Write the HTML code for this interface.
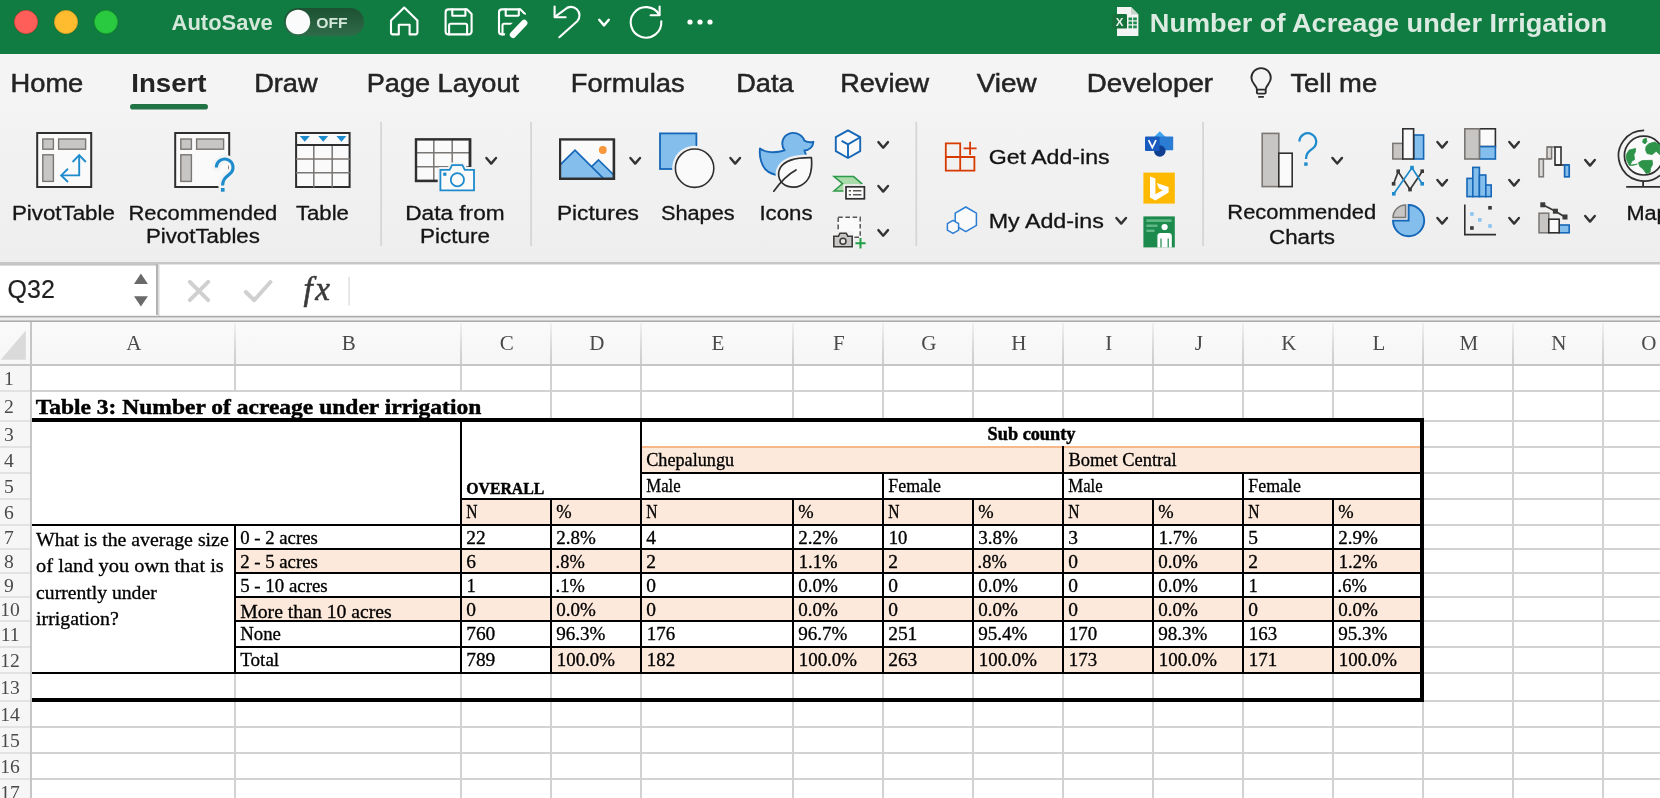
<!DOCTYPE html><html><head><meta charset="utf-8"><title>Number of Acreage under Irrigation</title><style>
*{box-sizing:border-box;margin:0;padding:0}
html,body{width:1660px;height:798px;overflow:hidden;background:#fff}
#root{position:absolute;left:0;top:0;width:1660px;height:798px;will-change:transform}
body{font-family:"Liberation Sans",sans-serif;position:relative;color:#242424}
.abs,.abs *{position:absolute}
#title{left:0;top:0;width:1660px;height:54px;background:#107c41}
#tabs{left:0;top:54px;width:1660px;height:58px;background:#f4f4f4}
#ribbon{left:0;top:112px;width:1660px;height:150px;background:linear-gradient(#f3f3f3,#eeeeee)}
#fbar{left:0;top:262px;width:1660px;height:60px;background:#e9e9e9}
#sheet{left:0;top:322px;width:1660px;height:476px;background:#fff;overflow:hidden}
.ln{position:absolute;background:#000}
.g{position:absolute;background:#d2d2d2}
.p{position:absolute;background:#fce9db}
</style></head><body><div id="root">
<div id="title" class="abs">
<svg style="position:absolute;left:0;top:0" width="1660" height="54" viewBox="0 0 1660 54"><defs><linearGradient id="tg" x1="0" y1="0" x2="0" y2="1"><stop offset="0" stop-color="#1d5132"/><stop offset="1" stop-color="#2f6b49"/></linearGradient></defs><circle cx="26" cy="22" r="12.3" fill="#0b6a36"/><circle cx="26" cy="22" r="11.6" fill="#ff5f58" stroke="#d8493f" stroke-width="0.8"/><circle cx="66" cy="22" r="12.3" fill="#0b6a36"/><circle cx="66" cy="22" r="11.6" fill="#febc2e" stroke="#d6a024" stroke-width="0.8"/><circle cx="106" cy="22" r="12.3" fill="#0b6a36"/><circle cx="106" cy="22" r="11.6" fill="#29c940" stroke="#1ea631" stroke-width="0.8"/><text x="171.6" y="29.6" font-family='"Liberation Sans",sans-serif' font-size="21.8" font-weight="bold" fill="#d3e8da" stroke="#d3e8da" stroke-width="0" textLength="101.2" lengthAdjust="spacingAndGlyphs" >AutoSave</text><rect x="284" y="8" width="80" height="28" rx="14" fill="url(#tg)"/><circle cx="298" cy="22" r="12.2" fill="#fbfbfb"/><text x="316.2" y="27.6" font-family='"Liberation Sans",sans-serif' font-size="14" font-weight="bold" fill="#d3e8da" stroke="#d3e8da" stroke-width="0" textLength="31.4" lengthAdjust="spacingAndGlyphs" >OFF</text><path d="M391 20.5 L404.2 7.6 L417.4 20.5 V32.6 a1.8 1.8 0 0 1 -1.8 1.8 H409.6 V24.8 H398.8 V34.4 H392.8 a1.8 1.8 0 0 1 -1.8 -1.8 Z" fill="none" stroke="#ffffff" stroke-width="2.1" stroke-linejoin="round" stroke-linecap="round"/><path d="M448.6 9.4 H467.1 L471.6 14 V31.4 a3 3 0 0 1 -3 3 H448.6 a3 3 0 0 1 -3 -3 V12.4 a3 3 0 0 1 3 -3 Z" fill="none" stroke="#ffffff" stroke-width="2.1" stroke-linejoin="round" stroke-linecap="round"/><path d="M452.3 9.4 V15.8 H465.4 V9.4" fill="none" stroke="#ffffff" stroke-width="2.1" stroke-linejoin="round" stroke-linecap="round"/><path d="M449.1 34.4 V25.2 a1.5 1.5 0 0 1 1.5 -1.5 H465.6 a1.5 1.5 0 0 1 1.5 1.5 V34.4" fill="none" stroke="#ffffff" stroke-width="2.1" stroke-linejoin="round" stroke-linecap="round"/><g><path d="M502.0 9.4 H520.5 L525.0 14 V31.4 a3 3 0 0 1 -3 3 H502.0 a3 3 0 0 1 -3 -3 V12.4 a3 3 0 0 1 3 -3 Z" fill="none" stroke="#ffffff" stroke-width="2.1" stroke-linejoin="round" stroke-linecap="round"/><path d="M505.7 9.4 V15.8 H518.8 V9.4" fill="none" stroke="#ffffff" stroke-width="2.1" stroke-linejoin="round" stroke-linecap="round"/><path d="M502.5 34.4 V25.2 a1.5 1.5 0 0 1 1.5 -1.5 H519.0 a1.5 1.5 0 0 1 1.5 1.5 V34.4" fill="none" stroke="#ffffff" stroke-width="2.1" stroke-linejoin="round" stroke-linecap="round"/></g><path d="M507 41 L509 31 L521.5 18.5 a3.2 3.2 0 0 1 4.6 0 l1.4 1.4 a3.2 3.2 0 0 1 0 4.6 L516 38 Z" fill="#107c41" stroke="#107c41" stroke-width="6.5" stroke-linejoin="round"/><rect x="516" y="30" width="12" height="8" fill="#107c41"/><path d="M513 34.8 L524.2 23" fill="none" stroke="#fff" stroke-width="6.4" stroke-linecap="round"/><path d="M554.6 6.6 V17.2 H565.6" fill="none" stroke="#ffffff" stroke-width="2.1" stroke-linejoin="round" stroke-linecap="round"/><path d="M555.2 16.6 L564.8 9.6 A8 8 0 0 1 577.2 21.2 L559.3 37.2" fill="none" stroke="#ffffff" stroke-width="2.1" stroke-linejoin="round" stroke-linecap="round"/><path d="M599.2 19.8 L604.0 25.4 L608.8 19.8" fill="none" stroke="#ffffff" stroke-width="2.4" stroke-linecap="round" stroke-linejoin="round"/><path d="M659.6 6.6 V15.2 H650.6" fill="none" stroke="#ffffff" stroke-width="2.1" stroke-linejoin="round" stroke-linecap="round"/><path d="M659.2 14.6 A15.3 15.3 0 1 0 661.3 21.4" fill="none" stroke="#ffffff" stroke-width="2.1" stroke-linejoin="round" stroke-linecap="round"/><circle cx="690" cy="22" r="2.6" fill="#fff"/><circle cx="700" cy="22" r="2.6" fill="#fff"/><circle cx="710" cy="22" r="2.6" fill="#fff"/><path d="M1117 7 H1131 L1138.4 14.4 V36 H1117 Z" fill="#f4f4f4"/><path d="M1131 7 V14.4 H1138.4 Z" fill="#c9d6cd"/><rect x="1128.5" y="17.5" width="3.6" height="2.8" fill="#1d8a4e"/><rect x="1133.2" y="17.5" width="3.6" height="2.8" fill="#1d8a4e"/><rect x="1128.5" y="21.5" width="3.6" height="2.8" fill="#1d8a4e"/><rect x="1133.2" y="21.5" width="3.6" height="2.8" fill="#1d8a4e"/><rect x="1128.5" y="25.5" width="3.6" height="2.8" fill="#1d8a4e"/><rect x="1133.2" y="25.5" width="3.6" height="2.8" fill="#1d8a4e"/><rect x="1112.4" y="14" width="14.6" height="14.6" rx="1.2" fill="#17713c"/><text x="1119.7" y="25.6" font-family='"Liberation Sans",sans-serif' font-size="11.5" font-weight="bold" fill="#eaf3ec" text-anchor="middle">X</text><text x="1149.8" y="31.6" font-family='"Liberation Sans",sans-serif' font-size="25" font-weight="bold" fill="#dcebe1" stroke="#dcebe1" stroke-width="0" textLength="457.3" lengthAdjust="spacingAndGlyphs" >Number of Acreage under Irrigation</text></svg>
</div>
<div id="tabs" class="abs"></div>
<svg style="position:absolute;left:0;top:54px" width="1660" height="60" viewBox="0 54 1660 60"><text x="10.5" y="91.6" font-family='"Liberation Sans",sans-serif' font-size="25.3" fill="#242424" stroke="#242424" stroke-width="0.5" textLength="72.8" lengthAdjust="spacingAndGlyphs" >Home</text><text x="131.2" y="91.6" font-family='"Liberation Sans",sans-serif' font-size="25.3" font-weight="bold" fill="#242424" stroke="#242424" stroke-width="0" textLength="75.4" lengthAdjust="spacingAndGlyphs" >Insert</text><text x="254.2" y="91.6" font-family='"Liberation Sans",sans-serif' font-size="25.3" fill="#242424" stroke="#242424" stroke-width="0.5" textLength="63.4" lengthAdjust="spacingAndGlyphs" >Draw</text><text x="366.7" y="91.6" font-family='"Liberation Sans",sans-serif' font-size="25.3" fill="#242424" stroke="#242424" stroke-width="0.5" textLength="152.4" lengthAdjust="spacingAndGlyphs" >Page Layout</text><text x="570.7" y="91.6" font-family='"Liberation Sans",sans-serif' font-size="25.3" fill="#242424" stroke="#242424" stroke-width="0.5" textLength="113.9" lengthAdjust="spacingAndGlyphs" >Formulas</text><text x="736.2" y="91.6" font-family='"Liberation Sans",sans-serif' font-size="25.3" fill="#242424" stroke="#242424" stroke-width="0.5" textLength="57.4" lengthAdjust="spacingAndGlyphs" >Data</text><text x="840.2" y="91.6" font-family='"Liberation Sans",sans-serif' font-size="25.3" fill="#242424" stroke="#242424" stroke-width="0.5" textLength="88.9" lengthAdjust="spacingAndGlyphs" >Review</text><text x="976.7" y="91.6" font-family='"Liberation Sans",sans-serif' font-size="25.3" fill="#242424" stroke="#242424" stroke-width="0.5" textLength="59.9" lengthAdjust="spacingAndGlyphs" >View</text><text x="1086.7" y="91.6" font-family='"Liberation Sans",sans-serif' font-size="25.3" fill="#242424" stroke="#242424" stroke-width="0.5" textLength="126.4" lengthAdjust="spacingAndGlyphs" >Developer</text><text x="1290.4" y="91.6" font-family='"Liberation Sans",sans-serif' font-size="25.3" fill="#242424" stroke="#242424" stroke-width="0.5" textLength="86.8" lengthAdjust="spacingAndGlyphs" >Tell me</text><rect x="130" y="104" width="78" height="5.6" rx="2.8" fill="#217346"/><path d="M1256.9 89.4 C1256.9 85.6 1251.4 83.6 1251.4 77.8 A9.7 9.7 0 0 1 1270.8 77.8 C1270.8 83.6 1265.7 85.6 1265.7 89.4 V92.6 a1 1 0 0 1 -1 1 H1257.9 a1 1 0 0 1 -1 -1 Z M1257 89.6 H1265.6 M1258.2 96.9 H1263.9" fill="none" stroke="#2b2b2b" stroke-width="1.9" stroke-linejoin="round"/></svg>
<div id="ribbon" class="abs"></div>
<svg style="position:absolute;left:0;top:0" width="1660" height="270" viewBox="0 0 1660 270"><rect x="380.2" y="122" width="1.8" height="124" fill="#d6d6d6"/><rect x="530.2" y="122" width="1.8" height="124" fill="#d6d6d6"/><rect x="915.4" y="122" width="1.8" height="124" fill="#d6d6d6"/><rect x="1202.2" y="122" width="1.8" height="124" fill="#d6d6d6"/><rect x="37.2" y="133.0" width="54" height="54" fill="#fafafa" stroke="#2f2f2f" stroke-width="2"/><rect x="42.8" y="139.0" width="10.6" height="10.2" fill="#c8c6c4" stroke="#797673" stroke-width="1.4"/><rect x="58.6" y="139.0" width="27" height="10.2" fill="#c8c6c4" stroke="#797673" stroke-width="1.4"/><rect x="42.8" y="154.8" width="10.6" height="26.6" fill="#c8c6c4" stroke="#797673" stroke-width="1.4"/><path d="M79.2 155.4 V175.4 H61.6" fill="none" stroke="#1e8bcd" stroke-width="1.9" stroke-linejoin="miter" stroke-linecap="butt"/><path d="M72.6 162 L79.2 155.2 L85.8 162" fill="none" stroke="#1e8bcd" stroke-width="1.9" stroke-linejoin="miter" stroke-linecap="butt"/><path d="M68 168.8 L61.2 175.4 L68 182" fill="none" stroke="#1e8bcd" stroke-width="1.9" stroke-linejoin="miter" stroke-linecap="butt"/><rect x="175.2" y="133.0" width="54" height="54" fill="#fafafa" stroke="#2f2f2f" stroke-width="2"/><rect x="180.8" y="139.0" width="10.6" height="10.2" fill="#c8c6c4" stroke="#797673" stroke-width="1.4"/><rect x="196.6" y="139.0" width="27" height="10.2" fill="#c8c6c4" stroke="#797673" stroke-width="1.4"/><rect x="180.8" y="154.8" width="10.6" height="26.6" fill="#c8c6c4" stroke="#797673" stroke-width="1.4"/><rect x="225" y="172" width="8" height="19" fill="#f1f1f1"/><path d="M216.4 167.4 a8.3 8.3 0 1 1 13.6 6.4 c-4.4 3.6 -7.4 5.6 -7.4 11.6" fill="none" stroke="#f4f4f4" stroke-width="8.4" stroke-linecap="round"/><rect x="218.6" y="185.6" width="8.4" height="8.6" fill="#f2f2f2"/><path d="M216.4 167.4 a8.3 8.3 0 1 1 13.6 6.4 c-4.4 3.6 -7.4 5.6 -7.4 11.6" fill="none" stroke="#1e8bcd" stroke-width="3.1" stroke-linecap="butt"/><rect x="220.9" y="188" width="3.7" height="3.7" fill="#1e8bcd"/><rect x="296.1" y="133" width="53.5" height="54" fill="#fafafa" stroke="#2f2f2f" stroke-width="2"/><path d="M313.8 145 V187.6 M332.2 145 V187.6 M296 159 H350.4 M296 172.8 H350.4" stroke="#797673" stroke-width="1.5" fill="none"/><path d="M296 145 H349.6" stroke="#2f2f2f" stroke-width="1.9"/><path d="M299.8 136 H309.8 L304.8 141.8 Z" fill="#1e8bcd"/><path d="M318.2 136 H328.2 L323.2 141.8 Z" fill="#1e8bcd"/><path d="M336.4 136 H346.4 L341.4 141.8 Z" fill="#1e8bcd"/><rect x="415.6" y="139" width="55" height="42.4" fill="#fafafa" stroke="#2f2f2f" stroke-width="1.6"/><path d="M433.8 139 V181 M452.2 139 V181 M416 152.8 H470 M416 166.8 H470" stroke="#797673" stroke-width="1.5" fill="none"/><rect x="416.2" y="139.6" width="53.4" height="41" fill="none" stroke="#2f2f2f" stroke-width="2"/><path d="M440.4 169.8 H449.6 L452 165.2 H462.4 L464.8 169.8 H474 V190.4 H440.4 Z" fill="#f1f1f1" stroke="#f1f1f1" stroke-width="5.4" stroke-linejoin="round"/><path d="M440.4 169.8 H449.6 L452 165.2 H462.4 L464.8 169.8 H474 V190.4 H440.4 Z" fill="#fafafa" stroke="#1e8bcd" stroke-width="1.8" stroke-linejoin="miter"/><circle cx="457.4" cy="179.8" r="6.6" fill="#fafafa" stroke="#1e8bcd" stroke-width="1.8"/><rect x="443.2" y="172.6" width="3.2" height="3.2" fill="#1e8bcd"/><path d="M486.4 158.0 L491.2 163.6 L496.0 158.0" fill="none" stroke="#333" stroke-width="2.4" stroke-linecap="round" stroke-linejoin="round"/><rect x="559.8" y="139.2" width="54.6" height="40" fill="#fafafa" stroke="#2f2f2f" stroke-width="1.6"/><clipPath id="pc"><rect x="560.6" y="140" width="53" height="38.4"/></clipPath><g clip-path="url(#pc)"><path d="M598.6 160 L620 181 H590 L585 173 Z" fill="#83beec" stroke="#1667b7" stroke-width="1.7" stroke-linejoin="miter"/><path d="M556 169 L575 150.2 L606 181 H556 Z" fill="#83beec" stroke="#1667b7" stroke-width="1.7" stroke-linejoin="miter"/></g><circle cx="602.8" cy="150" r="3.9" fill="#f7963a"/><rect x="560.2" y="139.6" width="53.4" height="38.9" fill="none" stroke="#2f2f2f" stroke-width="2"/><path d="M630.4 158.0 L635.2 163.6 L640.0 158.0" fill="none" stroke="#333" stroke-width="2.4" stroke-linecap="round" stroke-linejoin="round"/><rect x="660" y="133.4" width="36.4" height="35.6" fill="#83beec" stroke="#1667b7" stroke-width="1.8"/><circle cx="694.6" cy="168.2" r="22.4" fill="#f1f1f1"/><circle cx="694.6" cy="168.2" r="19.2" fill="#fafafa" stroke="#2f2f2f" stroke-width="1.6"/><path d="M730.4 158.0 L735.2 163.6 L740.0 158.0" fill="none" stroke="#333" stroke-width="2.4" stroke-linecap="round" stroke-linejoin="round"/><text x="11.9" y="220.0" font-family='"Liberation Sans",sans-serif' font-size="20" fill="#141414" stroke="#141414" stroke-width="0.3" textLength="103.0" lengthAdjust="spacingAndGlyphs" >PivotTable</text><text x="128.5" y="220.0" font-family='"Liberation Sans",sans-serif' font-size="20" fill="#141414" stroke="#141414" stroke-width="0.3" textLength="148.8" lengthAdjust="spacingAndGlyphs" >Recommended</text><text x="145.9" y="243.4" font-family='"Liberation Sans",sans-serif' font-size="20" fill="#141414" stroke="#141414" stroke-width="0.3" textLength="114.0" lengthAdjust="spacingAndGlyphs" >PivotTables</text><text x="295.9" y="220.0" font-family='"Liberation Sans",sans-serif' font-size="20" fill="#141414" stroke="#141414" stroke-width="0.3" textLength="53.0" lengthAdjust="spacingAndGlyphs" >Table</text><text x="405.2" y="220.0" font-family='"Liberation Sans",sans-serif' font-size="20" fill="#141414" stroke="#141414" stroke-width="0.3" textLength="99.4" lengthAdjust="spacingAndGlyphs" >Data from</text><text x="419.9" y="243.4" font-family='"Liberation Sans",sans-serif' font-size="20" fill="#141414" stroke="#141414" stroke-width="0.3" textLength="70.0" lengthAdjust="spacingAndGlyphs" >Picture</text><text x="556.9" y="220.0" font-family='"Liberation Sans",sans-serif' font-size="20" fill="#141414" stroke="#141414" stroke-width="0.3" textLength="82.0" lengthAdjust="spacingAndGlyphs" >Pictures</text><text x="660.9" y="220.0" font-family='"Liberation Sans",sans-serif' font-size="20" fill="#141414" stroke="#141414" stroke-width="0.3" textLength="73.7" lengthAdjust="spacingAndGlyphs" >Shapes</text><text x="759.4" y="220.0" font-family='"Liberation Sans",sans-serif' font-size="20" fill="#141414" stroke="#141414" stroke-width="0.3" textLength="53.2" lengthAdjust="spacingAndGlyphs" >Icons</text><path d="M760 148.4 C765 152.6 775 153.4 784.6 150.4 C781 146 781.6 138.6 786.6 135 C792.6 130.8 801.4 133 804.4 140.6 C807.4 142.4 810.6 142.6 813.4 141.8 C813 146.6 809.6 150.2 804.4 150.4 C808 158 806 168 798 173 C790 176.6 776 176.6 768 171.6 C761.6 167 759 157 760 148.4 Z" fill="#83beec" stroke="#1667b7" stroke-width="1.9" stroke-linejoin="round"/><path d="M811.4 157.6 C800 157.4 786 158.6 780.4 167.6 C776 175.4 780 184 788 186.4 C797 189 806 184.6 809.6 176 C811.8 170 812 163.6 811.4 157.6 Z" fill="#f1f1f1" stroke="#f1f1f1" stroke-width="6" stroke-linejoin="round"/><path d="M774 191 L781 182" stroke="#f1f1f1" stroke-width="5.4" fill="none"/><path d="M811.4 157.6 C800 157.4 786 158.6 780.4 167.6 C776 175.4 780 184 788 186.4 C797 189 806 184.6 809.6 176 C811.8 170 812 163.6 811.4 157.6 Z" fill="#fafafa" stroke="#2f2f2f" stroke-width="1.7" stroke-linejoin="round"/><path d="M773.8 191.2 C779 184 786 175.4 796 170" fill="none" stroke="#2f2f2f" stroke-width="1.7" stroke-linecap="round"/><path d="M848 130.4 L860.2 137.2 V151.2 L848 158 L835.8 151.2 V137.2 Z" fill="#fafafa" stroke="#1667b7" stroke-width="1.9" stroke-linejoin="round"/><path d="M848 158 V144.4 L860.2 137.2 M848 144.4 L841.6 140.8" fill="none" stroke="#1667b7" stroke-width="1.9" stroke-linecap="butt"/><path d="M878.4 142.1 L883.2 147.7 L888.0 142.1" fill="none" stroke="#333" stroke-width="2.4" stroke-linecap="round" stroke-linejoin="round"/><path d="M834 176.6 H853.6 L861.8 183.6 L853.6 191 H834 L842.6 183.6 Z" fill="#a9dcaa" stroke="#2f9a4a" stroke-width="1.5" stroke-linejoin="miter"/><rect x="843.4" y="184.2" width="23.4" height="16.8" fill="#f1f1f1"/><rect x="846" y="186.8" width="18.4" height="12" fill="#fafafa" stroke="#2f2f2f" stroke-width="1.7"/><path d="M848.8 190.8 h2.2 M853 190.8 h8.4 M848.8 194.8 h2.2 M853 194.8 h8.4" stroke="#5a5856" stroke-width="1.5" fill="none"/><path d="M878.4 186.0 L883.2 191.6 L888.0 186.0" fill="none" stroke="#333" stroke-width="2.4" stroke-linecap="round" stroke-linejoin="round"/><rect x="838.2" y="217.2" width="22" height="20" fill="#fafafa" stroke="#555" stroke-width="1.5" stroke-dasharray="4.6 2.6"/><path d="M831.8 231.4 H853.8 V249 H831.8 Z" fill="#f1f1f1"/><path d="M833.8 236.2 H838.4 L840 233.2 H846.2 L847.8 236.2 H852.2 V246.8 H833.8 Z" fill="#c8c6c4" stroke="#3b3a39" stroke-width="1.6" stroke-linejoin="miter"/><circle cx="843" cy="241.2" r="3" fill="#e8e7e6" stroke="#3b3a39" stroke-width="1.5"/><path d="M855.4 243.2 H865.6 M860.5 238 V248.4" stroke="#1e9e45" stroke-width="2" fill="none"/><path d="M878.4 230.1 L883.2 235.7 L888.0 230.1" fill="none" stroke="#333" stroke-width="2.4" stroke-linecap="round" stroke-linejoin="round"/><path d="M945.8 143.4 H960.2 V157 H945.8 Z M945.8 157 H960.2 V170.6 H945.8 Z M960.2 157 H974.4 V170.6 H960.2 Z" fill="none" stroke="#d83b01" stroke-width="1.8" stroke-linejoin="miter"/><path d="M963.6 148.4 H976.6 M970.1 141.8 V155" stroke="#d83b01" stroke-width="1.8" fill="none"/><text x="988.7" y="163.6" font-family='"Liberation Sans",sans-serif' font-size="20" fill="#141414" stroke="#141414" stroke-width="0.3" textLength="120.9" lengthAdjust="spacingAndGlyphs" >Get Add-ins</text><path d="M965.8 207 L976.4 213.2 V225.4 L965.8 231.6 L955.2 225.4 V213.2 Z" fill="#fafafa" stroke="#2b7cd3" stroke-width="1.5" stroke-linejoin="round"/><path d="M953 220.4 L958.6 223.6 V230.2 L953 233.4 L947.4 230.2 V223.6 Z" fill="#fafafa" stroke="#2b7cd3" stroke-width="1.5" stroke-linejoin="round"/><text x="988.7" y="227.6" font-family='"Liberation Sans",sans-serif' font-size="20" fill="#141414" stroke="#141414" stroke-width="0.3" textLength="115.1" lengthAdjust="spacingAndGlyphs" >My Add-ins</text><path d="M1116.4 218.0 L1121.2 223.6 L1126.0 218.0" fill="none" stroke="#333" stroke-width="2.4" stroke-linecap="round" stroke-linejoin="round"/><path d="M1159.8 131.2 L1166.6 138 L1159.8 144.8 L1153 138 Z" fill="#41a5ee"/><rect x="1159" y="136.6" width="14.2" height="13.6" rx="0.6" fill="#2b7cd3"/><circle cx="1159.8" cy="151" r="5.8" fill="#103f91"/><rect x="1145" y="136.4" width="14.6" height="14.6" rx="1" fill="#185abd"/><path d="M1148.6 140.2 L1152.3 147.6 L1156 140.2" fill="none" stroke="#fff" stroke-width="1.8" stroke-linejoin="miter"/><rect x="1143.4" y="172.6" width="31.4" height="31" fill="#ffb900"/><path d="M1150 176.6 L1155.4 178.4 V194.2 L1162.8 190.2 L1159 188.4 L1156.8 183 L1168.6 187 V192.6 L1155.4 200.4 L1150 197.4 Z" fill="#fff"/><rect x="1143.4" y="216.4" width="31.4" height="31" fill="#1b8a4c"/><path d="M1146.4 220.6 H1171.6 M1146.4 225.8 H1157.6 M1146.4 230.8 H1154.6" stroke="#5fb783" stroke-width="2.6" fill="none"/><circle cx="1164.6" cy="227" r="3.1" fill="#fff"/><path d="M1157.4 247.4 V236 a3 3 0 0 1 3 -3 h8.4 a3 3 0 0 1 3 3 V247.4 h-3 V238.6 h-1.2 V247.4 h-6 V238.6 h-1.2 V247.4 Z" fill="#fff"/><rect x="1262.2" y="133.4" width="16.6" height="53.2" fill="#c8c6c4" stroke="#797673" stroke-width="1.6"/><rect x="1278.8" y="153.2" width="13.4" height="33.4" fill="#fafafa" stroke="#2f2f2f" stroke-width="1.6"/><path d="M1299.4 141.6 a8.4 8.4 0 1 1 13.4 6.8 c-4.6 3.4 -6.8 5.4 -6.8 10.6" fill="none" stroke="#1e8bcd" stroke-width="2.3"/><rect x="1304.2" y="162.4" width="3.4" height="3.4" fill="#1e8bcd"/><path d="M1332.4 157.9 L1337.2 163.5 L1342.0 157.9" fill="none" stroke="#333" stroke-width="2.4" stroke-linecap="round" stroke-linejoin="round"/><text x="1227.3" y="219.4" font-family='"Liberation Sans",sans-serif' font-size="20" fill="#141414" stroke="#141414" stroke-width="0.3" textLength="148.8" lengthAdjust="spacingAndGlyphs" >Recommended</text><text x="1269.1" y="243.5" font-family='"Liberation Sans",sans-serif' font-size="20" fill="#141414" stroke="#141414" stroke-width="0.3" textLength="65.7" lengthAdjust="spacingAndGlyphs" >Charts</text><rect x="1392.8" y="143.4" width="10.0" height="15.6" fill="#c8c6c4" stroke="#797673" stroke-width="1.5"/><rect x="1413.8" y="135.0" width="9.8" height="24.0" fill="#83beec" stroke="#1667b7" stroke-width="1.6"/><rect x="1402.8" y="128.8" width="10.8" height="30.2" fill="#fafafa" stroke="#2f2f2f" stroke-width="1.6"/><path d="M1437.4 142.0 L1442.2 147.6 L1447.0 142.0" fill="none" stroke="#333" stroke-width="2.4" stroke-linecap="round" stroke-linejoin="round"/><path d="M1393.6 183.8 L1398.2 171.6 L1410 189.4 L1422.2 171.6" fill="none" stroke="#3b3a39" stroke-width="1.7" stroke-linejoin="miter"/><path d="M1393.8 193.8 L1412 167.8 L1422.2 183.8" fill="none" stroke="#1e8bcd" stroke-width="1.7" stroke-linejoin="miter"/><rect x="1391.8" y="182.0" width="3.6" height="3.6" fill="#3b3a39"/><rect x="1396.4" y="169.4" width="3.6" height="3.6" fill="#3b3a39"/><rect x="1408.2" y="187.8" width="3.6" height="3.6" fill="#3b3a39"/><rect x="1420.4" y="169.4" width="3.6" height="3.6" fill="#3b3a39"/><rect x="1392.0" y="192.0" width="3.6" height="3.6" fill="#1e8bcd"/><rect x="1410.2" y="165.8" width="3.6" height="3.6" fill="#1e8bcd"/><rect x="1420.4" y="182.0" width="3.6" height="3.6" fill="#1e8bcd"/><path d="M1437.4 180.0 L1442.2 185.6 L1447.0 180.0" fill="none" stroke="#333" stroke-width="2.4" stroke-linecap="round" stroke-linejoin="round"/><path d="M1408.6 220.6 V205 A15.6 15.6 0 1 1 1393 220.6 Z" fill="#83beec" stroke="#1667b7" stroke-width="1.9" stroke-linejoin="miter"/><path d="M1405.6 217.6 H1393 A12.6 12.6 0 0 1 1405.6 205 Z" fill="#c8c6c4" stroke="#797673" stroke-width="1.5" stroke-linejoin="miter"/><path d="M1437.4 218.0 L1442.2 223.6 L1447.0 218.0" fill="none" stroke="#333" stroke-width="2.4" stroke-linecap="round" stroke-linejoin="round"/><rect x="1479.4" y="128.8" width="16.0" height="17.8" fill="#fafafa" stroke="#2f2f2f" stroke-width="1.6"/><rect x="1479.4" y="146.6" width="16.0" height="12.4" fill="#83beec" stroke="#1667b7" stroke-width="1.6"/><rect x="1464.8" y="128.8" width="14.6" height="30.2" fill="#c8c6c4" stroke="#797673" stroke-width="1.6"/><path d="M1509.3 142.0 L1514.1 147.6 L1518.9 142.0" fill="none" stroke="#333" stroke-width="2.4" stroke-linecap="round" stroke-linejoin="round"/><rect x="1467.0" y="178.4" width="5.8" height="18.2" fill="#83beec" stroke="#1667b7" stroke-width="1.6"/><rect x="1472.8" y="167.4" width="6.6" height="29.2" fill="#83beec" stroke="#1667b7" stroke-width="1.6"/><rect x="1479.4" y="175.0" width="6.4" height="21.6" fill="#83beec" stroke="#1667b7" stroke-width="1.6"/><rect x="1485.8" y="185.0" width="5.4" height="11.6" fill="#83beec" stroke="#1667b7" stroke-width="1.6"/><path d="M1509.3 180.0 L1514.1 185.6 L1518.9 180.0" fill="none" stroke="#333" stroke-width="2.4" stroke-linecap="round" stroke-linejoin="round"/><path d="M1464.8 204.4 V234.6 H1496" fill="none" stroke="#2f2f2f" stroke-width="1.6"/><rect x="1488.2" y="206.0" width="3.6" height="3.6" fill="#3b3a39"/><rect x="1470.1" y="226.2" width="3.6" height="3.6" fill="#3b3a39"/><rect x="1470.1" y="212.2" width="3.6" height="3.6" fill="#8cc4f0"/><rect x="1478.0" y="218.1" width="3.6" height="3.6" fill="#8cc4f0"/><rect x="1488.2" y="224.2" width="3.6" height="3.6" fill="#8cc4f0"/><path d="M1509.3 218.0 L1514.1 223.6 L1518.9 218.0" fill="none" stroke="#333" stroke-width="2.4" stroke-linecap="round" stroke-linejoin="round"/><rect x="1539.0" y="159.0" width="4.4" height="17.8" fill="#dad9d8" stroke="#797673" stroke-width="1.5"/><rect x="1547.0" y="147.0" width="4.6" height="11.6" fill="#dad9d8" stroke="#797673" stroke-width="1.5"/><path d="M1539 159 H1551.6 M1547 147 H1555" stroke="#797673" stroke-width="1.5" fill="none"/><rect x="1555.0" y="147.0" width="6.0" height="18.0" fill="#fafafa" stroke="#2f2f2f" stroke-width="1.6"/><path d="M1555 165 H1569.2" stroke="#2f2f2f" stroke-width="1.6" fill="none"/><rect x="1564.6" y="165.0" width="4.6" height="11.8" fill="#83beec" stroke="#1667b7" stroke-width="1.7"/><path d="M1585.2 160.0 L1590.0 165.6 L1594.8 160.0" fill="none" stroke="#333" stroke-width="2.4" stroke-linecap="round" stroke-linejoin="round"/><rect x="1539.0" y="213.2" width="9.8" height="19.6" fill="#c8c6c4" stroke="#797673" stroke-width="1.5"/><rect x="1559.2" y="225.0" width="10.0" height="7.8" fill="#83beec" stroke="#1667b7" stroke-width="1.6"/><rect x="1548.8" y="219.2" width="10.4" height="13.6" fill="#fafafa" stroke="#2f2f2f" stroke-width="1.6"/><path d="M1542.8 204.8 L1555.4 211.2 L1565 217" fill="none" stroke="#3b3a39" stroke-width="1.8"/><rect x="1540.3" y="202.3" width="5.0" height="5.0" fill="#3b3a39"/><rect x="1552.9" y="208.7" width="5.0" height="5.0" fill="#3b3a39"/><rect x="1562.5" y="214.5" width="5.0" height="5.0" fill="#3b3a39"/><path d="M1585.2 216.0 L1590.0 221.6 L1594.8 216.0" fill="none" stroke="#333" stroke-width="2.4" stroke-linecap="round" stroke-linejoin="round"/><circle cx="1643.8" cy="155.6" r="19.4" fill="#fafafa" stroke="#2f2f2f" stroke-width="1.7"/><path d="M1644.2 130.3 A25.4 25.4 0 1 0 1660 175.4" fill="none" stroke="#2f2f2f" stroke-width="1.7"/><path d="M1626.2 186.9 H1660 M1643.1 181 V186.9" stroke="#2f2f2f" stroke-width="1.8" fill="none"/><path d="M1626.3 154.6 L1629.1 150.1 L1635.6 148.4 L1635.3 152.1 L1633.9 154.6 L1634.6 159.6 L1631.9 161.1 L1630.1 165.3 L1637.3 164.1 L1633.1 165.3 L1629.3 165.3 L1627.1 161.1 L1626.1 157.6 Z" fill="#2d9349" stroke="#2d9349" stroke-width="0.8" stroke-linejoin="round"/><path d="M1638.6 162.6 L1642.1 160.6 L1652.1 160.3 L1652.6 164.6 L1650.6 168.1 L1650.1 172.3 L1646.3 173.6 L1643.1 169.1 L1639.6 166.3 Z" fill="#2d9349" stroke="#2d9349" stroke-width="0.8" stroke-linejoin="round"/><path d="M1643.3 139.2 L1646.3 138.2 L1646.9 141.6 L1645.1 143.9 L1642.6 142.3 Z" fill="#2d9349" stroke="#2d9349" stroke-width="0.8" stroke-linejoin="round"/><path d="M1646.1 146.3 L1649.1 143.6 L1654.6 142.1 L1659.9 144.9 L1659.9 154.6 L1656.1 151.3 L1652.1 154.6 L1647.1 153.6 L1645.6 150.1 Z" fill="#2d9349" stroke="#2d9349" stroke-width="0.8" stroke-linejoin="round"/><text x="1626.4" y="219.5" font-family='"Liberation Sans",sans-serif' font-size="20" fill="#141414" stroke="#141414" stroke-width="0.3" textLength="42.2" lengthAdjust="spacingAndGlyphs" >Map</text></svg>
<div id="fbar" class="abs">
<svg style="position:absolute;left:0;top:0" width="1660" height="60" viewBox="0 262 1660 60"><defs><linearGradient id="fg" x1="0" y1="0" x2="0" y2="1"><stop offset="0" stop-color="#dcdcdc"/><stop offset="0.5" stop-color="#f4f4f4"/><stop offset="1" stop-color="#dcdcdc"/></linearGradient></defs><rect x="0" y="262" width="1660" height="60" fill="#ececec"/><rect x="0" y="317" width="1660" height="4" fill="url(#fg)"/><rect x="0" y="262" width="1660" height="2" fill="#c6c6c6"/><rect x="0" y="264" width="1660" height="52" fill="#ffffff"/><rect x="0" y="264" width="158" height="1.6" fill="#c4c4c4"/><rect x="158" y="264" width="1502" height="1" fill="#e4e4e4"/><rect x="156" y="264" width="2" height="51" fill="#b4b4b4"/><rect x="158" y="264" width="1.6" height="52" fill="#dcdcdc"/><rect x="0" y="315.8" width="1660" height="1.5" fill="#a9a9a9"/><rect x="0" y="320.5" width="1660" height="1.5" fill="#adadad"/><text x="7.6" y="298.0" font-family='"Liberation Sans",sans-serif' font-size="25" fill="#1f1f1f" stroke="#1f1f1f" stroke-width="0.2" textLength="47.2" lengthAdjust="spacingAndGlyphs" >Q32</text><path d="M140.9 273.6 L147.9 283.9 H134 Z M140.9 306.6 L147.9 296.2 H134 Z" fill="#6a6a6a"/><path d="M189.8 281.8 L208.2 300.2 M208.2 281.8 L189.8 300.2" stroke="#d0d0d0" stroke-width="4" stroke-linecap="round" fill="none"/><path d="M245.8 292 L254.2 300.2 L270.4 282" stroke="#d0d0d0" stroke-width="4" stroke-linecap="round" stroke-linejoin="round" fill="none"/><text x="303.6" y="299.8" font-family='"Liberation Serif",serif' font-style="italic" font-size="33" fill="#3a3a3a" stroke="#3a3a3a" stroke-width="0.6" letter-spacing="2.5">fx</text><rect x="348.4" y="276.6" width="1.4" height="29" fill="#dedede"/></svg>
</div>
<div id="sheet" class="abs"></div>
<div style="position:absolute;left:0;top:322px;width:1660px;height:44px;background:linear-gradient(#fafafa,#f6f6f6)"></div>
<div style="position:absolute;left:0;top:366px;width:32px;height:432px;background:#f6f6f6"></div>
<div class="g" style="left:32px;top:364px;width:1628px;height:2px"></div>
<div class="g" style="left:0;top:364px;width:32px;height:2px;background:#e2e2e2"></div>
<div class="g" style="left:32px;top:390px;width:1628px;height:2px"></div>
<div class="g" style="left:0;top:390px;width:32px;height:2px;background:#e2e2e2"></div>
<div class="g" style="left:32px;top:420px;width:1628px;height:2px"></div>
<div class="g" style="left:0;top:420px;width:32px;height:2px;background:#e2e2e2"></div>
<div class="g" style="left:32px;top:446px;width:1628px;height:2px"></div>
<div class="g" style="left:0;top:446px;width:32px;height:2px;background:#e2e2e2"></div>
<div class="g" style="left:32px;top:472px;width:1628px;height:2px"></div>
<div class="g" style="left:0;top:472px;width:32px;height:2px;background:#e2e2e2"></div>
<div class="g" style="left:32px;top:498px;width:1628px;height:2px"></div>
<div class="g" style="left:0;top:498px;width:32px;height:2px;background:#e2e2e2"></div>
<div class="g" style="left:32px;top:524px;width:1628px;height:2px"></div>
<div class="g" style="left:0;top:524px;width:32px;height:2px;background:#e2e2e2"></div>
<div class="g" style="left:32px;top:548px;width:1628px;height:2px"></div>
<div class="g" style="left:0;top:548px;width:32px;height:2px;background:#e2e2e2"></div>
<div class="g" style="left:32px;top:572px;width:1628px;height:2px"></div>
<div class="g" style="left:0;top:572px;width:32px;height:2px;background:#e2e2e2"></div>
<div class="g" style="left:32px;top:596px;width:1628px;height:2px"></div>
<div class="g" style="left:0;top:596px;width:32px;height:2px;background:#e2e2e2"></div>
<div class="g" style="left:32px;top:620px;width:1628px;height:2px"></div>
<div class="g" style="left:0;top:620px;width:32px;height:2px;background:#e2e2e2"></div>
<div class="g" style="left:32px;top:646px;width:1628px;height:2px"></div>
<div class="g" style="left:0;top:646px;width:32px;height:2px;background:#e2e2e2"></div>
<div class="g" style="left:32px;top:672px;width:1628px;height:2px"></div>
<div class="g" style="left:0;top:672px;width:32px;height:2px;background:#e2e2e2"></div>
<div class="g" style="left:32px;top:700px;width:1628px;height:2px"></div>
<div class="g" style="left:0;top:700px;width:32px;height:2px;background:#e2e2e2"></div>
<div class="g" style="left:32px;top:726px;width:1628px;height:2px"></div>
<div class="g" style="left:0;top:726px;width:32px;height:2px;background:#e2e2e2"></div>
<div class="g" style="left:32px;top:752px;width:1628px;height:2px"></div>
<div class="g" style="left:0;top:752px;width:32px;height:2px;background:#e2e2e2"></div>
<div class="g" style="left:32px;top:778px;width:1628px;height:2px"></div>
<div class="g" style="left:0;top:778px;width:32px;height:2px;background:#e2e2e2"></div>
<div class="g" style="left:30px;top:366px;width:2px;height:432px"></div>
<div class="g" style="left:234px;top:366px;width:2px;height:432px"></div>
<div class="g" style="left:460px;top:366px;width:2px;height:432px"></div>
<div class="g" style="left:550px;top:366px;width:2px;height:432px"></div>
<div class="g" style="left:640px;top:366px;width:2px;height:432px"></div>
<div class="g" style="left:792px;top:366px;width:2px;height:432px"></div>
<div class="g" style="left:882px;top:366px;width:2px;height:432px"></div>
<div class="g" style="left:972px;top:366px;width:2px;height:432px"></div>
<div class="g" style="left:1062px;top:366px;width:2px;height:432px"></div>
<div class="g" style="left:1152px;top:366px;width:2px;height:432px"></div>
<div class="g" style="left:1242px;top:366px;width:2px;height:432px"></div>
<div class="g" style="left:1332px;top:366px;width:2px;height:432px"></div>
<div class="g" style="left:1422px;top:366px;width:2px;height:432px"></div>
<div class="g" style="left:1512px;top:366px;width:2px;height:432px"></div>
<div class="g" style="left:1602px;top:366px;width:2px;height:432px"></div>
<div class="g" style="left:234px;top:323px;width:2px;height:42px;background:linear-gradient(#f0f0f0,#d4d4d4 70%,#cccccc)"></div>
<div class="g" style="left:460px;top:323px;width:2px;height:42px;background:linear-gradient(#f0f0f0,#d4d4d4 70%,#cccccc)"></div>
<div class="g" style="left:550px;top:323px;width:2px;height:42px;background:linear-gradient(#f0f0f0,#d4d4d4 70%,#cccccc)"></div>
<div class="g" style="left:640px;top:323px;width:2px;height:42px;background:linear-gradient(#f0f0f0,#d4d4d4 70%,#cccccc)"></div>
<div class="g" style="left:792px;top:323px;width:2px;height:42px;background:linear-gradient(#f0f0f0,#d4d4d4 70%,#cccccc)"></div>
<div class="g" style="left:882px;top:323px;width:2px;height:42px;background:linear-gradient(#f0f0f0,#d4d4d4 70%,#cccccc)"></div>
<div class="g" style="left:972px;top:323px;width:2px;height:42px;background:linear-gradient(#f0f0f0,#d4d4d4 70%,#cccccc)"></div>
<div class="g" style="left:1062px;top:323px;width:2px;height:42px;background:linear-gradient(#f0f0f0,#d4d4d4 70%,#cccccc)"></div>
<div class="g" style="left:1152px;top:323px;width:2px;height:42px;background:linear-gradient(#f0f0f0,#d4d4d4 70%,#cccccc)"></div>
<div class="g" style="left:1242px;top:323px;width:2px;height:42px;background:linear-gradient(#f0f0f0,#d4d4d4 70%,#cccccc)"></div>
<div class="g" style="left:1332px;top:323px;width:2px;height:42px;background:linear-gradient(#f0f0f0,#d4d4d4 70%,#cccccc)"></div>
<div class="g" style="left:1422px;top:323px;width:2px;height:42px;background:linear-gradient(#f0f0f0,#d4d4d4 70%,#cccccc)"></div>
<div class="g" style="left:1512px;top:323px;width:2px;height:42px;background:linear-gradient(#f0f0f0,#d4d4d4 70%,#cccccc)"></div>
<div class="g" style="left:1602px;top:323px;width:2px;height:42px;background:linear-gradient(#f0f0f0,#d4d4d4 70%,#cccccc)"></div>
<div class="g" style="left:30px;top:322px;width:2px;height:476px;background:#c6c6c6"></div>
<div class="g" style="left:0;top:364px;width:1660px;height:2px;background:#c6c6c6"></div>
<svg style="position:absolute;left:0;top:322px" width="1660" height="476" viewBox="0 322 1660 476">
<path d="M25.8 330.4 V359.8 H0.6 Z" fill="#dadada"/>
<text x="133.8" y="350" font-family="'Liberation Serif',serif" font-size="21" fill="#4a4a4a" text-anchor="middle">A</text>
<text x="348.8" y="350" font-family="'Liberation Serif',serif" font-size="21" fill="#4a4a4a" text-anchor="middle">B</text>
<text x="506.8" y="350" font-family="'Liberation Serif',serif" font-size="21" fill="#4a4a4a" text-anchor="middle">C</text>
<text x="596.8" y="350" font-family="'Liberation Serif',serif" font-size="21" fill="#4a4a4a" text-anchor="middle">D</text>
<text x="717.8" y="350" font-family="'Liberation Serif',serif" font-size="21" fill="#4a4a4a" text-anchor="middle">E</text>
<text x="838.8" y="350" font-family="'Liberation Serif',serif" font-size="21" fill="#4a4a4a" text-anchor="middle">F</text>
<text x="928.8" y="350" font-family="'Liberation Serif',serif" font-size="21" fill="#4a4a4a" text-anchor="middle">G</text>
<text x="1018.8" y="350" font-family="'Liberation Serif',serif" font-size="21" fill="#4a4a4a" text-anchor="middle">H</text>
<text x="1108.8" y="350" font-family="'Liberation Serif',serif" font-size="21" fill="#4a4a4a" text-anchor="middle">I</text>
<text x="1198.8" y="350" font-family="'Liberation Serif',serif" font-size="21" fill="#4a4a4a" text-anchor="middle">J</text>
<text x="1288.8" y="350" font-family="'Liberation Serif',serif" font-size="21" fill="#4a4a4a" text-anchor="middle">K</text>
<text x="1378.8" y="350" font-family="'Liberation Serif',serif" font-size="21" fill="#4a4a4a" text-anchor="middle">L</text>
<text x="1468.8" y="350" font-family="'Liberation Serif',serif" font-size="21" fill="#4a4a4a" text-anchor="middle">M</text>
<text x="1558.8" y="350" font-family="'Liberation Serif',serif" font-size="21" fill="#4a4a4a" text-anchor="middle">N</text>
<text x="1648.8" y="350" font-family="'Liberation Serif',serif" font-size="21" fill="#4a4a4a" text-anchor="middle">O</text>
<text x="8.9" y="385.4" font-family="'Liberation Serif',serif" font-size="19.6" fill="#4a4a4a" text-anchor="middle">1</text>
<text x="8.9" y="413.4" font-family="'Liberation Serif',serif" font-size="19.6" fill="#4a4a4a" text-anchor="middle">2</text>
<text x="8.9" y="441.4" font-family="'Liberation Serif',serif" font-size="19.6" fill="#4a4a4a" text-anchor="middle">3</text>
<text x="8.9" y="467.4" font-family="'Liberation Serif',serif" font-size="19.6" fill="#4a4a4a" text-anchor="middle">4</text>
<text x="8.9" y="493.4" font-family="'Liberation Serif',serif" font-size="19.6" fill="#4a4a4a" text-anchor="middle">5</text>
<text x="8.9" y="519.4" font-family="'Liberation Serif',serif" font-size="19.6" fill="#4a4a4a" text-anchor="middle">6</text>
<text x="8.9" y="544.4" font-family="'Liberation Serif',serif" font-size="19.6" fill="#4a4a4a" text-anchor="middle">7</text>
<text x="8.9" y="568.4" font-family="'Liberation Serif',serif" font-size="19.6" fill="#4a4a4a" text-anchor="middle">8</text>
<text x="8.9" y="592.4" font-family="'Liberation Serif',serif" font-size="19.6" fill="#4a4a4a" text-anchor="middle">9</text>
<text x="10.1" y="616.4" font-family="'Liberation Serif',serif" font-size="19.6" fill="#4a4a4a" text-anchor="middle">10</text>
<text x="10.1" y="641.4" font-family="'Liberation Serif',serif" font-size="19.6" fill="#4a4a4a" text-anchor="middle">11</text>
<text x="10.1" y="667.4" font-family="'Liberation Serif',serif" font-size="19.6" fill="#4a4a4a" text-anchor="middle">12</text>
<text x="10.1" y="694.4" font-family="'Liberation Serif',serif" font-size="19.6" fill="#4a4a4a" text-anchor="middle">13</text>
<text x="10.1" y="721.4" font-family="'Liberation Serif',serif" font-size="19.6" fill="#4a4a4a" text-anchor="middle">14</text>
<text x="10.1" y="747.4" font-family="'Liberation Serif',serif" font-size="19.6" fill="#4a4a4a" text-anchor="middle">15</text>
<text x="10.1" y="773.4" font-family="'Liberation Serif',serif" font-size="19.6" fill="#4a4a4a" text-anchor="middle">16</text>
<text x="10.1" y="799.4" font-family="'Liberation Serif',serif" font-size="19.6" fill="#4a4a4a" text-anchor="middle">17</text>
</svg>
<div class="p" style="left:32px;top:392px;width:518px;height:28px;background:#fff"></div>
<div class="p" style="left:32px;top:422px;width:428px;height:102px;background:#fff"></div>
<div class="p" style="left:462px;top:422px;width:178px;height:76px;background:#fff"></div>
<div class="p" style="left:642px;top:422px;width:780px;height:24px;background:#fff"></div>
<div class="p" style="left:642px;top:474px;width:420px;height:24px;background:#fff"></div>
<div class="p" style="left:1064px;top:474px;width:358px;height:24px;background:#fff"></div>
<div class="p" style="left:32px;top:526px;width:202px;height:146px;background:#fff"></div>
<div class="p" style="left:642px;top:448px;width:780px;height:24px;background:#fce9db"></div>
<div class="p" style="left:462px;top:500px;width:960px;height:24px;background:#fce9db"></div>
<div class="p" style="left:236px;top:550px;width:1186px;height:22px;background:#fce9db"></div>
<div class="p" style="left:236px;top:598px;width:1186px;height:22px;background:#fce9db"></div>
<div class="p" style="left:552px;top:648px;width:870px;height:24px;background:#fce9db"></div>
<div class="ln" style="left:642px;top:446px;width:780px;height:2px;background:#f6b889"></div>
<div class="ln" style="left:32px;top:418px;width:1392px;height:4px"></div>
<div class="ln" style="left:32px;top:698px;width:1392px;height:4px"></div>
<div class="ln" style="left:32px;top:524px;width:1392px;height:2px"></div>
<div class="ln" style="left:32px;top:672px;width:1392px;height:2px"></div>
<div class="ln" style="left:640px;top:472px;width:784px;height:2px"></div>
<div class="ln" style="left:460px;top:498px;width:964px;height:2px"></div>
<div class="ln" style="left:234px;top:548px;width:1190px;height:2px"></div>
<div class="ln" style="left:234px;top:572px;width:1190px;height:2px"></div>
<div class="ln" style="left:234px;top:596px;width:1190px;height:2px"></div>
<div class="ln" style="left:234px;top:620px;width:1190px;height:2px"></div>
<div class="ln" style="left:234px;top:646px;width:1190px;height:2px"></div>
<div class="ln" style="left:1420px;top:420px;width:4px;height:282px"></div>
<div class="ln" style="left:460px;top:420px;width:2px;height:254px"></div>
<div class="ln" style="left:640px;top:420px;width:2px;height:254px"></div>
<div class="ln" style="left:234px;top:524px;width:2px;height:150px"></div>
<div class="ln" style="left:550px;top:498px;width:2px;height:176px"></div>
<div class="ln" style="left:792px;top:498px;width:2px;height:176px"></div>
<div class="ln" style="left:972px;top:498px;width:2px;height:176px"></div>
<div class="ln" style="left:1152px;top:498px;width:2px;height:176px"></div>
<div class="ln" style="left:1332px;top:498px;width:2px;height:176px"></div>
<div class="ln" style="left:882px;top:472px;width:2px;height:202px"></div>
<div class="ln" style="left:1242px;top:472px;width:2px;height:202px"></div>
<div class="ln" style="left:1062px;top:446px;width:2px;height:228px"></div>
<svg style="position:absolute;left:0;top:322px" width="1660" height="476" viewBox="0 322 1660 476">
<text x="35.7" y="413.9" font-family="'Liberation Serif',serif" font-size="22" font-weight="bold" fill="#000" stroke="#000" stroke-width="0.45" textLength="445.6" lengthAdjust="spacingAndGlyphs">Table 3: Number of acreage under irrigation</text>
<text x="987.6" y="439.8" font-family="'Liberation Serif',serif" font-size="18" font-weight="bold" fill="#000" stroke="#000" stroke-width="0.45" textLength="87.8" lengthAdjust="spacingAndGlyphs">Sub county</text>
<text x="646.2" y="465.8" font-family="'Liberation Serif',serif" font-size="18" fill="#000" stroke="#000" stroke-width="0.3" textLength="87.9" lengthAdjust="spacingAndGlyphs">Chepalungu</text>
<text x="1068.4" y="465.8" font-family="'Liberation Serif',serif" font-size="18" fill="#000" stroke="#000" stroke-width="0.3" textLength="108.2" lengthAdjust="spacingAndGlyphs">Bomet Central</text>
<text x="466.2" y="493.5" font-family="'Liberation Serif',serif" font-size="17.6" font-weight="bold" fill="#000" stroke="#000" stroke-width="0.45" textLength="78.2" lengthAdjust="spacingAndGlyphs">OVERALL</text>
<text x="646.3" y="491.9" font-family="'Liberation Serif',serif" font-size="18" fill="#000" stroke="#000" stroke-width="0.3" textLength="34.4" lengthAdjust="spacingAndGlyphs">Male</text>
<text x="1068.3" y="491.9" font-family="'Liberation Serif',serif" font-size="18" fill="#000" stroke="#000" stroke-width="0.3" textLength="34.4" lengthAdjust="spacingAndGlyphs">Male</text>
<text x="888.3" y="491.9" font-family="'Liberation Serif',serif" font-size="18" fill="#000" stroke="#000" stroke-width="0.3" textLength="52.5" lengthAdjust="spacingAndGlyphs">Female</text>
<text x="1248.3" y="491.9" font-family="'Liberation Serif',serif" font-size="18" fill="#000" stroke="#000" stroke-width="0.3" textLength="52.5" lengthAdjust="spacingAndGlyphs">Female</text>
<text x="466.3" y="518.1" font-family="'Liberation Serif',serif" font-size="18" fill="#000" stroke="#000" stroke-width="0.3" textLength="11.2" lengthAdjust="spacingAndGlyphs">N</text>
<text x="556.2" y="518.1" font-family="'Liberation Serif',serif" font-size="18" fill="#000" stroke="#000" stroke-width="0.3" textLength="15.4" lengthAdjust="spacingAndGlyphs">%</text>
<text x="646.3" y="518.1" font-family="'Liberation Serif',serif" font-size="18" fill="#000" stroke="#000" stroke-width="0.3" textLength="11.2" lengthAdjust="spacingAndGlyphs">N</text>
<text x="798.2" y="518.1" font-family="'Liberation Serif',serif" font-size="18" fill="#000" stroke="#000" stroke-width="0.3" textLength="15.4" lengthAdjust="spacingAndGlyphs">%</text>
<text x="888.3" y="518.1" font-family="'Liberation Serif',serif" font-size="18" fill="#000" stroke="#000" stroke-width="0.3" textLength="11.2" lengthAdjust="spacingAndGlyphs">N</text>
<text x="978.2" y="518.1" font-family="'Liberation Serif',serif" font-size="18" fill="#000" stroke="#000" stroke-width="0.3" textLength="15.4" lengthAdjust="spacingAndGlyphs">%</text>
<text x="1068.3" y="518.1" font-family="'Liberation Serif',serif" font-size="18" fill="#000" stroke="#000" stroke-width="0.3" textLength="11.2" lengthAdjust="spacingAndGlyphs">N</text>
<text x="1158.2" y="518.1" font-family="'Liberation Serif',serif" font-size="18" fill="#000" stroke="#000" stroke-width="0.3" textLength="15.4" lengthAdjust="spacingAndGlyphs">%</text>
<text x="1248.3" y="518.1" font-family="'Liberation Serif',serif" font-size="18" fill="#000" stroke="#000" stroke-width="0.3" textLength="11.2" lengthAdjust="spacingAndGlyphs">N</text>
<text x="1338.2" y="518.1" font-family="'Liberation Serif',serif" font-size="18" fill="#000" stroke="#000" stroke-width="0.3" textLength="15.4" lengthAdjust="spacingAndGlyphs">%</text>
<text x="240.2" y="543.6" font-family="'Liberation Serif',serif" font-size="18" fill="#000" stroke="#000" stroke-width="0.3" textLength="77.6" lengthAdjust="spacingAndGlyphs">0 - 2 acres</text>
<text x="466.2" y="543.6" font-family="'Liberation Serif',serif" font-size="18" fill="#000" stroke="#000" stroke-width="0.3" textLength="19.4" lengthAdjust="spacingAndGlyphs">22</text>
<text x="556.2" y="543.6" font-family="'Liberation Serif',serif" font-size="18" fill="#000" stroke="#000" stroke-width="0.3" textLength="39.6" lengthAdjust="spacingAndGlyphs">2.8%</text>
<text x="646.2" y="543.6" font-family="'Liberation Serif',serif" font-size="18" fill="#000" stroke="#000" stroke-width="0.3" textLength="9.7" lengthAdjust="spacingAndGlyphs">4</text>
<text x="798.2" y="543.6" font-family="'Liberation Serif',serif" font-size="18" fill="#000" stroke="#000" stroke-width="0.3" textLength="39.6" lengthAdjust="spacingAndGlyphs">2.2%</text>
<text x="888.8" y="543.6" font-family="'Liberation Serif',serif" font-size="18" fill="#000" stroke="#000" stroke-width="0.3" textLength="18.6" lengthAdjust="spacingAndGlyphs">10</text>
<text x="978.2" y="543.6" font-family="'Liberation Serif',serif" font-size="18" fill="#000" stroke="#000" stroke-width="0.3" textLength="39.6" lengthAdjust="spacingAndGlyphs">3.8%</text>
<text x="1068.2" y="543.6" font-family="'Liberation Serif',serif" font-size="18" fill="#000" stroke="#000" stroke-width="0.3" textLength="9.7" lengthAdjust="spacingAndGlyphs">3</text>
<text x="1158.8" y="543.6" font-family="'Liberation Serif',serif" font-size="18" fill="#000" stroke="#000" stroke-width="0.3" textLength="38.8" lengthAdjust="spacingAndGlyphs">1.7%</text>
<text x="1248.2" y="543.6" font-family="'Liberation Serif',serif" font-size="18" fill="#000" stroke="#000" stroke-width="0.3" textLength="9.7" lengthAdjust="spacingAndGlyphs">5</text>
<text x="1338.2" y="543.6" font-family="'Liberation Serif',serif" font-size="18" fill="#000" stroke="#000" stroke-width="0.3" textLength="39.6" lengthAdjust="spacingAndGlyphs">2.9%</text>
<text x="240.2" y="567.9" font-family="'Liberation Serif',serif" font-size="18" fill="#000" stroke="#000" stroke-width="0.3" textLength="77.6" lengthAdjust="spacingAndGlyphs">2 - 5 acres</text>
<text x="466.2" y="567.9" font-family="'Liberation Serif',serif" font-size="18" fill="#000" stroke="#000" stroke-width="0.3" textLength="9.7" lengthAdjust="spacingAndGlyphs">6</text>
<text x="555.6" y="567.9" font-family="'Liberation Serif',serif" font-size="18" fill="#000" stroke="#000" stroke-width="0.3" textLength="29.1" lengthAdjust="spacingAndGlyphs">.8%</text>
<text x="646.2" y="567.9" font-family="'Liberation Serif',serif" font-size="18" fill="#000" stroke="#000" stroke-width="0.3" textLength="9.7" lengthAdjust="spacingAndGlyphs">2</text>
<text x="798.8" y="567.9" font-family="'Liberation Serif',serif" font-size="18" fill="#000" stroke="#000" stroke-width="0.3" textLength="38.8" lengthAdjust="spacingAndGlyphs">1.1%</text>
<text x="888.2" y="567.9" font-family="'Liberation Serif',serif" font-size="18" fill="#000" stroke="#000" stroke-width="0.3" textLength="9.7" lengthAdjust="spacingAndGlyphs">2</text>
<text x="977.6" y="567.9" font-family="'Liberation Serif',serif" font-size="18" fill="#000" stroke="#000" stroke-width="0.3" textLength="29.1" lengthAdjust="spacingAndGlyphs">.8%</text>
<text x="1068.2" y="567.9" font-family="'Liberation Serif',serif" font-size="18" fill="#000" stroke="#000" stroke-width="0.3" textLength="9.7" lengthAdjust="spacingAndGlyphs">0</text>
<text x="1158.2" y="567.9" font-family="'Liberation Serif',serif" font-size="18" fill="#000" stroke="#000" stroke-width="0.3" textLength="39.6" lengthAdjust="spacingAndGlyphs">0.0%</text>
<text x="1248.2" y="567.9" font-family="'Liberation Serif',serif" font-size="18" fill="#000" stroke="#000" stroke-width="0.3" textLength="9.7" lengthAdjust="spacingAndGlyphs">2</text>
<text x="1338.8" y="567.9" font-family="'Liberation Serif',serif" font-size="18" fill="#000" stroke="#000" stroke-width="0.3" textLength="38.8" lengthAdjust="spacingAndGlyphs">1.2%</text>
<text x="240.2" y="592.0" font-family="'Liberation Serif',serif" font-size="18" fill="#000" stroke="#000" stroke-width="0.3" textLength="87.5" lengthAdjust="spacingAndGlyphs">5 - 10 acres</text>
<text x="466.8" y="592.0" font-family="'Liberation Serif',serif" font-size="18" fill="#000" stroke="#000" stroke-width="0.3" textLength="8.9" lengthAdjust="spacingAndGlyphs">1</text>
<text x="555.6" y="592.0" font-family="'Liberation Serif',serif" font-size="18" fill="#000" stroke="#000" stroke-width="0.3" textLength="29.1" lengthAdjust="spacingAndGlyphs">.1%</text>
<text x="646.2" y="592.0" font-family="'Liberation Serif',serif" font-size="18" fill="#000" stroke="#000" stroke-width="0.3" textLength="9.7" lengthAdjust="spacingAndGlyphs">0</text>
<text x="798.2" y="592.0" font-family="'Liberation Serif',serif" font-size="18" fill="#000" stroke="#000" stroke-width="0.3" textLength="39.6" lengthAdjust="spacingAndGlyphs">0.0%</text>
<text x="888.2" y="592.0" font-family="'Liberation Serif',serif" font-size="18" fill="#000" stroke="#000" stroke-width="0.3" textLength="9.7" lengthAdjust="spacingAndGlyphs">0</text>
<text x="978.2" y="592.0" font-family="'Liberation Serif',serif" font-size="18" fill="#000" stroke="#000" stroke-width="0.3" textLength="39.6" lengthAdjust="spacingAndGlyphs">0.0%</text>
<text x="1068.2" y="592.0" font-family="'Liberation Serif',serif" font-size="18" fill="#000" stroke="#000" stroke-width="0.3" textLength="9.7" lengthAdjust="spacingAndGlyphs">0</text>
<text x="1158.2" y="592.0" font-family="'Liberation Serif',serif" font-size="18" fill="#000" stroke="#000" stroke-width="0.3" textLength="39.6" lengthAdjust="spacingAndGlyphs">0.0%</text>
<text x="1248.8" y="592.0" font-family="'Liberation Serif',serif" font-size="18" fill="#000" stroke="#000" stroke-width="0.3" textLength="8.9" lengthAdjust="spacingAndGlyphs">1</text>
<text x="1337.6" y="592.0" font-family="'Liberation Serif',serif" font-size="18" fill="#000" stroke="#000" stroke-width="0.3" textLength="29.1" lengthAdjust="spacingAndGlyphs">.6%</text>
<text x="240.2" y="618.4" font-family="'Liberation Serif',serif" font-size="19.7" fill="#000" stroke="#000" stroke-width="0.3" textLength="151.6" lengthAdjust="spacingAndGlyphs">More than 10 acres</text>
<text x="466.2" y="616.0" font-family="'Liberation Serif',serif" font-size="18" fill="#000" stroke="#000" stroke-width="0.3" textLength="9.7" lengthAdjust="spacingAndGlyphs">0</text>
<text x="556.2" y="616.0" font-family="'Liberation Serif',serif" font-size="18" fill="#000" stroke="#000" stroke-width="0.3" textLength="39.6" lengthAdjust="spacingAndGlyphs">0.0%</text>
<text x="646.2" y="616.0" font-family="'Liberation Serif',serif" font-size="18" fill="#000" stroke="#000" stroke-width="0.3" textLength="9.7" lengthAdjust="spacingAndGlyphs">0</text>
<text x="798.2" y="616.0" font-family="'Liberation Serif',serif" font-size="18" fill="#000" stroke="#000" stroke-width="0.3" textLength="39.6" lengthAdjust="spacingAndGlyphs">0.0%</text>
<text x="888.2" y="616.0" font-family="'Liberation Serif',serif" font-size="18" fill="#000" stroke="#000" stroke-width="0.3" textLength="9.7" lengthAdjust="spacingAndGlyphs">0</text>
<text x="978.2" y="616.0" font-family="'Liberation Serif',serif" font-size="18" fill="#000" stroke="#000" stroke-width="0.3" textLength="39.6" lengthAdjust="spacingAndGlyphs">0.0%</text>
<text x="1068.2" y="616.0" font-family="'Liberation Serif',serif" font-size="18" fill="#000" stroke="#000" stroke-width="0.3" textLength="9.7" lengthAdjust="spacingAndGlyphs">0</text>
<text x="1158.2" y="616.0" font-family="'Liberation Serif',serif" font-size="18" fill="#000" stroke="#000" stroke-width="0.3" textLength="39.6" lengthAdjust="spacingAndGlyphs">0.0%</text>
<text x="1248.2" y="616.0" font-family="'Liberation Serif',serif" font-size="18" fill="#000" stroke="#000" stroke-width="0.3" textLength="9.7" lengthAdjust="spacingAndGlyphs">0</text>
<text x="1338.2" y="616.0" font-family="'Liberation Serif',serif" font-size="18" fill="#000" stroke="#000" stroke-width="0.3" textLength="39.6" lengthAdjust="spacingAndGlyphs">0.0%</text>
<text x="240.2" y="639.8" font-family="'Liberation Serif',serif" font-size="18" fill="#000" stroke="#000" stroke-width="0.3" textLength="40.7" lengthAdjust="spacingAndGlyphs">None</text>
<text x="466.2" y="639.8" font-family="'Liberation Serif',serif" font-size="18" fill="#000" stroke="#000" stroke-width="0.3" textLength="29.1" lengthAdjust="spacingAndGlyphs">760</text>
<text x="556.2" y="639.8" font-family="'Liberation Serif',serif" font-size="18" fill="#000" stroke="#000" stroke-width="0.3" textLength="49.3" lengthAdjust="spacingAndGlyphs">96.3%</text>
<text x="646.8" y="639.8" font-family="'Liberation Serif',serif" font-size="18" fill="#000" stroke="#000" stroke-width="0.3" textLength="28.3" lengthAdjust="spacingAndGlyphs">176</text>
<text x="798.2" y="639.8" font-family="'Liberation Serif',serif" font-size="18" fill="#000" stroke="#000" stroke-width="0.3" textLength="49.3" lengthAdjust="spacingAndGlyphs">96.7%</text>
<text x="888.2" y="639.8" font-family="'Liberation Serif',serif" font-size="18" fill="#000" stroke="#000" stroke-width="0.3" textLength="29.1" lengthAdjust="spacingAndGlyphs">251</text>
<text x="978.2" y="639.8" font-family="'Liberation Serif',serif" font-size="18" fill="#000" stroke="#000" stroke-width="0.3" textLength="49.3" lengthAdjust="spacingAndGlyphs">95.4%</text>
<text x="1068.8" y="639.8" font-family="'Liberation Serif',serif" font-size="18" fill="#000" stroke="#000" stroke-width="0.3" textLength="28.3" lengthAdjust="spacingAndGlyphs">170</text>
<text x="1158.2" y="639.8" font-family="'Liberation Serif',serif" font-size="18" fill="#000" stroke="#000" stroke-width="0.3" textLength="49.3" lengthAdjust="spacingAndGlyphs">98.3%</text>
<text x="1248.8" y="639.8" font-family="'Liberation Serif',serif" font-size="18" fill="#000" stroke="#000" stroke-width="0.3" textLength="28.3" lengthAdjust="spacingAndGlyphs">163</text>
<text x="1338.2" y="639.8" font-family="'Liberation Serif',serif" font-size="18" fill="#000" stroke="#000" stroke-width="0.3" textLength="49.3" lengthAdjust="spacingAndGlyphs">95.3%</text>
<text x="240.2" y="665.8" font-family="'Liberation Serif',serif" font-size="18" fill="#000" stroke="#000" stroke-width="0.3" textLength="39.0" lengthAdjust="spacingAndGlyphs">Total</text>
<text x="466.2" y="665.8" font-family="'Liberation Serif',serif" font-size="18" fill="#000" stroke="#000" stroke-width="0.3" textLength="29.1" lengthAdjust="spacingAndGlyphs">789</text>
<text x="556.8" y="665.8" font-family="'Liberation Serif',serif" font-size="18" fill="#000" stroke="#000" stroke-width="0.3" textLength="58.2" lengthAdjust="spacingAndGlyphs">100.0%</text>
<text x="646.8" y="665.8" font-family="'Liberation Serif',serif" font-size="18" fill="#000" stroke="#000" stroke-width="0.3" textLength="28.3" lengthAdjust="spacingAndGlyphs">182</text>
<text x="798.8" y="665.8" font-family="'Liberation Serif',serif" font-size="18" fill="#000" stroke="#000" stroke-width="0.3" textLength="58.2" lengthAdjust="spacingAndGlyphs">100.0%</text>
<text x="888.2" y="665.8" font-family="'Liberation Serif',serif" font-size="18" fill="#000" stroke="#000" stroke-width="0.3" textLength="29.1" lengthAdjust="spacingAndGlyphs">263</text>
<text x="978.8" y="665.8" font-family="'Liberation Serif',serif" font-size="18" fill="#000" stroke="#000" stroke-width="0.3" textLength="58.2" lengthAdjust="spacingAndGlyphs">100.0%</text>
<text x="1068.8" y="665.8" font-family="'Liberation Serif',serif" font-size="18" fill="#000" stroke="#000" stroke-width="0.3" textLength="28.3" lengthAdjust="spacingAndGlyphs">173</text>
<text x="1158.8" y="665.8" font-family="'Liberation Serif',serif" font-size="18" fill="#000" stroke="#000" stroke-width="0.3" textLength="58.2" lengthAdjust="spacingAndGlyphs">100.0%</text>
<text x="1248.8" y="665.8" font-family="'Liberation Serif',serif" font-size="18" fill="#000" stroke="#000" stroke-width="0.3" textLength="28.3" lengthAdjust="spacingAndGlyphs">171</text>
<text x="1338.8" y="665.8" font-family="'Liberation Serif',serif" font-size="18" fill="#000" stroke="#000" stroke-width="0.3" textLength="58.2" lengthAdjust="spacingAndGlyphs">100.0%</text>
<text x="36.1" y="546.3" font-family="'Liberation Serif',serif" font-size="19.7" fill="#000" stroke="#000" stroke-width="0.3" textLength="192.6" lengthAdjust="spacingAndGlyphs">What is the average size</text>
<text x="36.1" y="572.4" font-family="'Liberation Serif',serif" font-size="19.7" fill="#000" stroke="#000" stroke-width="0.3" textLength="187.7" lengthAdjust="spacingAndGlyphs">of land you own that is</text>
<text x="36.1" y="598.5" font-family="'Liberation Serif',serif" font-size="19.7" fill="#000" stroke="#000" stroke-width="0.3" textLength="120.6" lengthAdjust="spacingAndGlyphs">currently under</text>
<text x="36.1" y="624.6" font-family="'Liberation Serif',serif" font-size="19.7" fill="#000" stroke="#000" stroke-width="0.3" textLength="82.7" lengthAdjust="spacingAndGlyphs">irrigation?</text>
</svg>
</div></body></html>
